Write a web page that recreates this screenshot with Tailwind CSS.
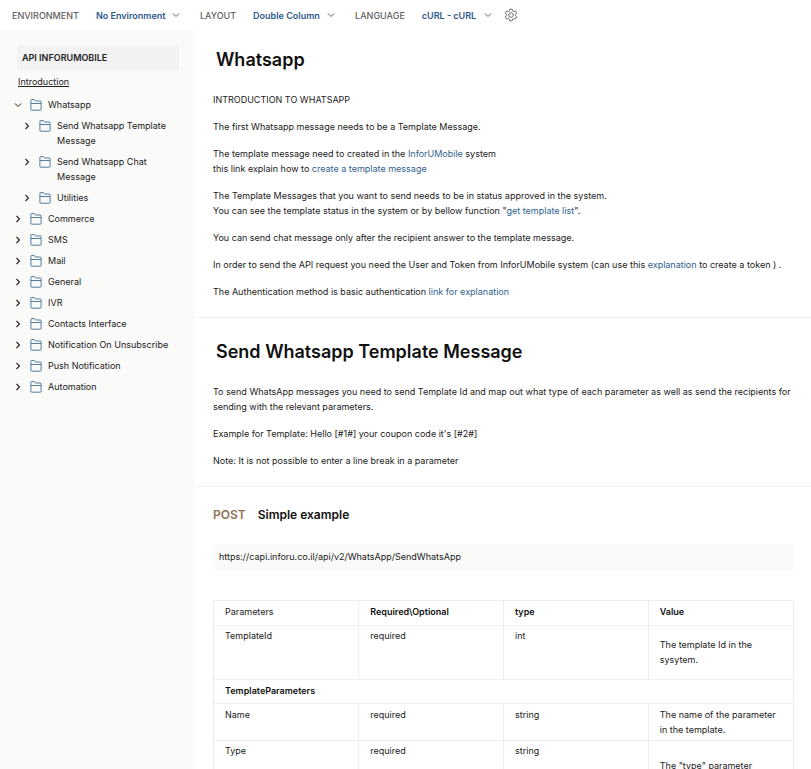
<!DOCTYPE html>
<html lang="en">
<head>
    <meta charset="UTF-8">
    <meta name="viewport" content="width=device-width, initial-scale=1.0">
    <title>API INFORUMOBILE</title>
    <script src="https://cdn.jsdelivr.net/npm/@tailwindcss/browser@4"></script>
</head>
<body class="h-screen flex flex-col bg-white font-['Inter',sans-serif] text-[9px] leading-[15px] text-[#212121]">
    <!-- Shared icons -->
    <svg class="hidden">
        <symbol id="down" viewBox="0 0 8 8"><path d="M1 2.5 4 5.5 7 2.5" fill="none" stroke="currentColor"/></symbol>
        <symbol id="right" viewBox="0 0 8 8"><path d="M2.5 1 5.5 4 2.5 7" fill="none" stroke="currentColor" stroke-width="1.1"/></symbol>
        <symbol id="folder" viewBox="0 0 12 12"><path d="M.9 10.5V1.2q0-.7.7-.7h2.7l1.2 1.5h4.9q.7 0 .7.7v7.8q0 .7-.7.7H1.6q-.7 0-.7-.7ZM.9 4.5h10.2" fill="none" stroke="currentColor" stroke-width=".9"/></symbol>
    </svg>

    <!-- Top bar -->
    <header class="h-[30px] shrink-0 flex items-center pl-3 font-medium text-[#5f5f5f]">
        <label for="environment" class="mr-[17px]">ENVIRONMENT</label>
        <div class="relative flex items-center mr-5">
            <select id="environment" class="appearance-none w-[84px] font-semibold text-[#2c5a8c]">
                <option>No Environment</option>
            </select>
            <svg class="absolute right-0 size-2 pointer-events-none"><use href="#down"/></svg>
        </div>
        <label for="layout" class="mr-[17px]">LAYOUT</label>
        <div class="relative flex items-center mr-5">
            <select id="layout" class="appearance-none w-[82px] font-semibold text-[#2c5a8c]">
                <option>Double Column</option>
            </select>
            <svg class="absolute right-0 size-2 pointer-events-none"><use href="#down"/></svg>
        </div>
        <label for="language" class="mr-[17px]">LANGUAGE</label>
        <div class="relative flex items-center mr-3">
            <select id="language" class="appearance-none w-[70px] font-semibold text-[#2c5a8c]">
                <option>cURL - cURL</option>
            </select>
            <svg class="absolute right-0 size-2 pointer-events-none"><use href="#down"/></svg>
        </div>
        <button type="button" aria-label="Settings">
            <svg class="size-[14px]" viewBox="0 0 14 14" fill="none" stroke="currentColor" stroke-width=".9" stroke-linejoin="round">
                <path d="M5.8 1.2h2.4l.4 1.7 1 .6 1.7-.6 1.4 2.2-1.3 1.3v1.2l1.3 1.3-1.4 2.2-1.7-.6-1 .6-.4 1.7H5.8l-.4-1.7-1-.6-1.7.6-1.4-2.2 1.3-1.3V6.4L1.3 5.1l1.4-2.2 1.7.6 1-.6Z"/>
                <circle cx="7" cy="7" r="2.3"/>
            </svg>
        </button>
    </header>

    <div class="flex flex-1 min-h-0">
        <!-- Sidebar -->
        <nav class="w-[195px] shrink-0 bg-[#fafaf9] pt-4 px-4">
            <div class="ml-px h-6 px-[5px] pb-px flex items-center bg-[#f2f2f2] font-semibold">API INFORUMOBILE</div>
            <a href="#introduction" class="block pt-1 pb-[5px] pl-[2px] underline underline-offset-1">Introduction</a>
            <ul>
                <li>
                    <a href="#whatsapp" class="flex py-[3px]"><svg class="size-2 mt-1 -ml-[2px] mr-2"><use href="#down"/></svg><svg class="size-3 mt-[2px] mr-[6px] text-[#3f7199]"><use href="#folder"/></svg>Whatsapp</a>
                    <ul class="ml-[9px]">
                        <li><a href="#send-template" class="flex py-[3px]"><svg class="size-2 shrink-0 mt-1 -ml-[2px] mr-2"><use href="#right"/></svg><svg class="size-3 shrink-0 mt-[2px] mr-[6px] text-[#3f7199]"><use href="#folder"/></svg>Send Whatsapp Template Message</a></li>
                        <li><a href="#send-chat" class="flex py-[3px] pr-4"><svg class="size-2 shrink-0 mt-1 -ml-[2px] mr-2"><use href="#right"/></svg><svg class="size-3 shrink-0 mt-[2px] mr-[6px] text-[#3f7199]"><use href="#folder"/></svg>Send Whatsapp Chat Message</a></li>
                        <li><a href="#utilities" class="flex py-[3px]"><svg class="size-2 mt-1 -ml-[2px] mr-2"><use href="#right"/></svg><svg class="size-3 mt-[2px] mr-[6px] text-[#3f7199]"><use href="#folder"/></svg>Utilities</a></li>
                    </ul>
                </li>
                <li><a href="#commerce" class="flex py-[3px]"><svg class="size-2 mt-1 -ml-[2px] mr-2"><use href="#right"/></svg><svg class="size-3 mt-[2px] mr-[6px] text-[#3f7199]"><use href="#folder"/></svg>Commerce</a></li>
                <li><a href="#sms" class="flex py-[3px]"><svg class="size-2 mt-1 -ml-[2px] mr-2"><use href="#right"/></svg><svg class="size-3 mt-[2px] mr-[6px] text-[#3f7199]"><use href="#folder"/></svg>SMS</a></li>
                <li><a href="#mail" class="flex py-[3px]"><svg class="size-2 mt-1 -ml-[2px] mr-2"><use href="#right"/></svg><svg class="size-3 mt-[2px] mr-[6px] text-[#3f7199]"><use href="#folder"/></svg>Mail</a></li>
                <li><a href="#general" class="flex py-[3px]"><svg class="size-2 mt-1 -ml-[2px] mr-2"><use href="#right"/></svg><svg class="size-3 mt-[2px] mr-[6px] text-[#3f7199]"><use href="#folder"/></svg>General</a></li>
                <li><a href="#ivr" class="flex py-[3px]"><svg class="size-2 mt-1 -ml-[2px] mr-2"><use href="#right"/></svg><svg class="size-3 mt-[2px] mr-[6px] text-[#3f7199]"><use href="#folder"/></svg>IVR</a></li>
                <li><a href="#contacts" class="flex py-[3px]"><svg class="size-2 mt-1 -ml-[2px] mr-2"><use href="#right"/></svg><svg class="size-3 mt-[2px] mr-[6px] text-[#3f7199]"><use href="#folder"/></svg>Contacts Interface</a></li>
                <li><a href="#unsubscribe" class="flex py-[3px]"><svg class="size-2 mt-1 -ml-[2px] mr-2"><use href="#right"/></svg><svg class="size-3 mt-[2px] mr-[6px] text-[#3f7199]"><use href="#folder"/></svg>Notification On Unsubscribe</a></li>
                <li><a href="#push" class="flex py-[3px]"><svg class="size-2 mt-1 -ml-[2px] mr-2"><use href="#right"/></svg><svg class="size-3 mt-[2px] mr-[6px] text-[#3f7199]"><use href="#folder"/></svg>Push Notification</a></li>
                <li><a href="#automation" class="flex py-[3px]"><svg class="size-2 mt-1 -ml-[2px] mr-2"><use href="#right"/></svg><svg class="size-3 mt-[2px] mr-[6px] text-[#3f7199]"><use href="#folder"/></svg>Automation</a></li>
            </ul>
        </nav>

        <!-- Documentation -->
        <main class="flex-1 min-w-0 overflow-y-auto [scrollbar-width:none]">
            <section id="whatsapp" class="px-[18px] pt-[18px] pb-[18px] border-b border-[#efefef]">
                <h1 class="pl-[3px] mb-5 text-lg leading-6 font-semibold text-[#111]">Whatsapp</h1>
                <div class="space-y-3">
                    <p>INTRODUCTION TO WHATSAPP</p>
                    <p>The first Whatsapp message needs to be a Template Message.</p>
                    <p>The template message need to created in the <a href="#" class="text-[#2f5f8f]">InforUMobile</a> system<br>this link explain how to <a href="#" class="text-[#2f5f8f]">create a template message</a></p>
                    <p>The Template Messages that you want to send needs to be in status approved in the system.<br>You can see the template status in the system or by bellow function "<a href="#" class="text-[#2f5f8f]">get template list</a>".</p>
                    <p>You can send chat message only after the recipient answer to the template message.</p>
                    <p>In order to send the API request you need the User and Token from InforUMobile system (can use this <a href="#" class="text-[#2f5f8f]">explanation</a> to create a token ) .</p>
                    <p>The Authentication method is basic authentication <a href="#" class="text-[#2f5f8f]">link for explanation</a></p>
                </div>
            </section>

            <section id="send-template" class="px-[18px] pt-[22px] pb-[18px] border-b border-[#efefef]">
                <h1 class="pl-[3px] mb-5 text-lg leading-6 font-semibold text-[#111]">Send Whatsapp Template Message</h1>
                <div class="space-y-3">
                    <p>To send WhatsApp messages you need to send Template Id and map out what type of each parameter as well as send the recipients for sending with the relevant parameters.</p>
                    <p>Example for Template: Hello [#1#] your coupon code it's [#2#]</p>
                    <p>Note: It is not possible to enter a line break in a parameter</p>
                </div>
            </section>

            <section class="pl-[18px] pr-[17px] pt-[18px]">
                <h2 class="flex gap-3 text-xs leading-5 font-semibold text-[#111]"><span class="text-[#8f7355]">POST</span>Simple example</h2>
                <div class="mt-[19px] mb-[29px] pl-[6px] pt-[5px] pb-[7px] rounded-xs bg-[#fafaf9]">https://capi.inforu.co.il/api/v2/WhatsApp/SendWhatsApp</div>
                <div class="rounded-xs border border-[#ececec]">
                    <table class="w-full table-fixed text-left align-top">
                        <thead>
                            <tr class="h-6 align-top border-b border-[#efefef] text-[#111]">
                                <th class="px-[11px] py-[3px] font-normal text-[#212121]">Parameters</th>
                                <th class="px-[11px] py-[3px] font-semibold border-l border-[#efefef]">Required\Optional</th>
                                <th class="px-[11px] py-[3px] font-semibold border-l border-[#efefef]">type</th>
                                <th class="px-[11px] py-[3px] font-semibold border-l border-[#efefef]">Value</th>
                            </tr>
                        </thead>
                        <tbody>
                            <tr class="align-top border-b border-[#efefef]">
                                <td class="px-[11px] py-[2px]">TemplateId</td>
                                <td class="px-[11px] py-[2px] border-l border-[#efefef]">required</td>
                                <td class="px-[11px] py-[2px] border-l border-[#efefef]">int</td>
                                <td class="px-[11px] pt-[11px] pb-3 border-l border-[#efefef]">The template Id in the sysytem.</td>
                            </tr>
                            <tr class="h-6 align-top border-b border-[#efefef]">
                                <td colspan="4" class="px-[11px] py-[3px] font-semibold text-[#111]">TemplateParameters</td>
                            </tr>
                            <tr class="align-top border-b border-[#efefef]">
                                <td class="px-[11px] py-[3px]">Name</td>
                                <td class="px-[11px] py-[3px] border-l border-[#efefef]">required</td>
                                <td class="px-[11px] py-[3px] border-l border-[#efefef]">string</td>
                                <td class="px-[11px] py-[3px] border-l border-[#efefef]">The name of the parameter in the template.</td>
                            </tr>
                            <tr class="align-top">
                                <td class="px-[11px] py-[2px]">Type</td>
                                <td class="px-[11px] py-[2px] border-l border-[#efefef]">required</td>
                                <td class="px-[11px] py-[2px] border-l border-[#efefef]">string</td>
                                <td class="px-[11px] pt-[17px] pb-3 border-l border-[#efefef]">The "type" parameter</td>
                            </tr>
                        </tbody>
                    </table>
                </div>
            </section>
        </main>
    </div>
</body>
</html>
